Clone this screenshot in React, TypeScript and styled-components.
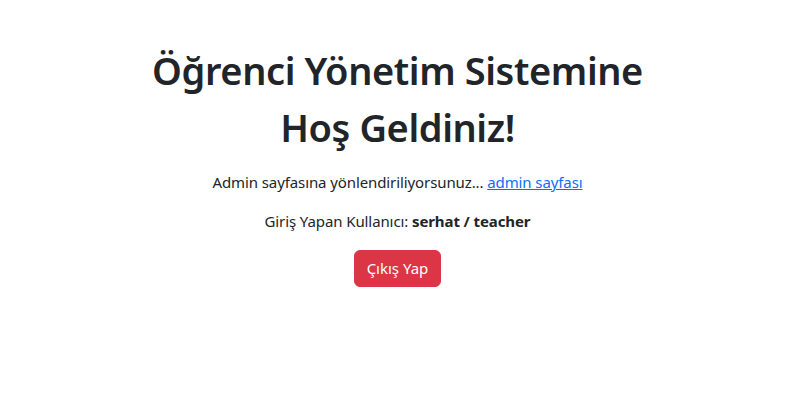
import React from "react";
import styled, { createGlobalStyle } from "styled-components";

const GlobalStyle = createGlobalStyle`
  body {
    margin: 0;
    background: #ffffff;
    color: #212529;
    font-family: "Noto Sans", "Open Sans", sans-serif;
    font-size: 15px;
    line-height: 24px;
  }
`;

const Page = styled.div`
  display: flex;
  flex-direction: column;
  align-items: center;
  text-align: center;
  padding: 42px 7px 0 0;
`;

const Title = styled.h1`
  margin: 0 0 14px;
  max-width: 520px;
  font-size: 38px;
  font-weight: 600;
  line-height: 57px;
  letter-spacing: -0.4px;
`;

const Line = styled.p<{ $gap: number }>`
  margin: 0 0 ${(p) => p.$gap}px;
  letter-spacing: -0.1px;
`;

const AdminLink = styled.a`
  color: #0d6efd;
  text-decoration: underline;
`;

const LogoutButton = styled.button`
  padding: 6px 12px;
  font-family: inherit;
  font-size: 15px;
  line-height: 23px;
  color: #fff;
  background-color: #dc3545;
  border: 1px solid #dc3545;
  border-radius: 6px;
  cursor: pointer;
`;

export default function App() {
  return (
    <>
      <GlobalStyle />
      <Page>
        <Title>Öğrenci Yönetim Sistemine Hoş Geldiniz!</Title>
        <Line $gap={15}>
          Admin sayfasına yönlendiriliyorsunuz... <AdminLink href="#">admin sayfası</AdminLink>
        </Line>
        <Line $gap={17}>
          Giriş Yapan Kullanıcı: <strong>serhat / teacher</strong>
        </Line>
        <LogoutButton>Çıkış Yap</LogoutButton>
      </Page>
    </>
  );
}
